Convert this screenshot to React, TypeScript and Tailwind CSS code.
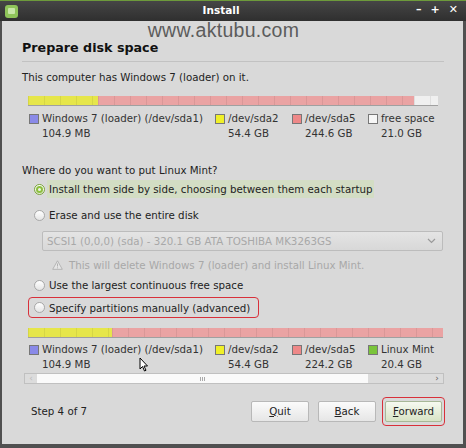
import React from "react";

const font = { fontFamily: '"DejaVu Sans", "Liberation Sans", sans-serif' };

function Radio({ checked }: { checked?: boolean }) {
  return (
    <span
      className={
        "inline-flex items-center justify-center w-[11px] h-[11px] rounded-full border shrink-0 " +
        (checked
          ? "border-[#7aa33a] bg-gradient-to-b from-[#ffffff] to-[#dfe8cf]"
          : "border-[#a8a8a8] bg-gradient-to-b from-[#ffffff] to-[#e4e4e4]")
      }
    >
      {checked && <span className="w-[7px] h-[7px] rounded-full border-2 border-[#8cbf3f]" />}
    </span>
  );
}

function Swatch({ color }: { color: string }) {
  return <span className="w-[10px] h-[10px] border border-[#777] shrink-0 mt-[3px]" style={{ background: color }} />;
}

function Legend({ items }: { items: { color: string; name: string; size: string; w: string }[] }) {
  return (
    <div className="flex pl-[27px] text-[10.25px] leading-[15px] text-[#333] whitespace-nowrap">
      {items.map((it, i) => (
        <div key={i} className={"flex gap-[3px] " + it.w}>
          <Swatch color={it.color} />
          <div className="flex flex-col">
            <span>{it.name}</span>
            <span>{it.size}</span>
          </div>
        </div>
      ))}
    </div>
  );
}

function Bar({ segs, width }: { segs: { color: string; w: number }[]; width: string }) {
  return (
    <div className={"flex h-[10px] ml-[26px] border-b border-[#a0a0a0] " + width}>
      {segs.map((s, i) => (
        <div
          key={i}
          className="h-full"
          style={{
            width: s.w,
            background: s.color,
            backgroundImage:
              "repeating-linear-gradient(90deg, rgba(0,0,0,0.07) 0 1px, transparent 1px 16px)",
          }}
        />
      ))}
    </div>
  );
}

export default function App() {
  return (
    <div className="w-[466px] h-[448px] bg-[#d9d9d9] flex flex-col overflow-hidden relative" style={font}>
      {/* title bar */}
      <div className="h-[21px] shrink-0 bg-gradient-to-b from-[#474747] to-[#2f2f2f] flex items-center relative">
        <div className="absolute left-0 right-0 top-0 h-[1px] bg-[#6d9a3b]" />
        <div className="ml-[5px] mt-[1px] w-[13px] h-[13px] rounded-[3px] bg-[#8fc45a] flex items-center justify-center">
          <div className="w-[7px] h-[6px] rounded-[1px] bg-[#c8e6a8]" />
        </div>
        <div className="flex-1 text-center text-white font-bold text-[10.5px] pl-[8px]">Install</div>
        <div className="flex gap-[9px] pr-[8px] text-white text-[11px] font-bold">
          <span>–</span>
          <span>+</span>
          <span>✕</span>
        </div>
      </div>
      <div className="flex-1 flex flex-col border-l-[2px] border-r-[3px] border-b-[4px] border-[#505050] text-[10.25px] text-[#222] whitespace-nowrap">
        {/* watermark */}
        <div
          className="h-[19px] text-center text-[#5c5c5c] text-[19.5px] leading-[19px] pr-[18px]"
          style={{ fontFamily: '"Liberation Sans", sans-serif', letterSpacing: "0.3px" }}
        >
          www.aktubu.com
        </div>
        <div className="pl-[20px] pr-[19px]">
          <div className="text-[12.7px] font-bold text-[#111] leading-[16px] h-[16px]">Prepare disk space</div>
          <div className="h-px bg-[#c2c2c2] mt-[5px]" />
        </div>
        <div className="pl-[20px] leading-[14px] mt-[8px]">This computer has Windows 7 (loader) on it.</div>
        <div className="mt-[12px]">
          <Bar
            width="w-[410px]"
            segs={[
              { color: "#e6e64a", w: 70 },
              { color: "#eaa3a3", w: 316 },
              { color: "#f0f0f0", w: 24 },
            ]}
          />
        </div>
        <div className="mt-[5px]">
          <Legend
            items={[
              { color: "#8a8ae8", name: "Windows 7 (loader) (/dev/sda1)", size: "104.9 MB", w: "w-[186px]" },
              { color: "#f0f028", name: "/dev/sda2", size: "54.4 GB", w: "w-[77px]" },
              { color: "#ee8888", name: "/dev/sda5", size: "244.6 GB", w: "w-[76px]" },
              { color: "#f6f6f6", name: "free space", size: "21.0 GB", w: "w-[80px]" },
            ]}
          />
        </div>
        <div className="pl-[20px] mt-[22px] leading-[14px]">Where do you want to put Linux Mint?</div>
        <div className="flex flex-col pl-[32px] leading-[16px]">
          <div className="flex items-center gap-[2px] mt-[3px] h-[18px]">
            <Radio checked />
            <span className="bg-[#d3ddc4] px-[2px] leading-[18px] h-[18px] rounded-[1px]">
              Install them side by side, choosing between them each startup
            </span>
          </div>
          <div className="flex items-center gap-[4px] mt-[9px] h-[16px]">
            <Radio />
            <span>Erase and use the entire disk</span>
          </div>
          <div className="ml-[8px] mt-[8px] w-[401px] h-[20px] border border-[#bcbcbc] rounded-[2px] bg-gradient-to-b from-[#e4e4e4] to-[#d8d8d8] flex items-center justify-between pl-[4px] pr-[6px] text-[#a8a8a8]">
            <span>SCSI1 (0,0,0) (sda) - 320.1 GB ATA TOSHIBA MK3263GS</span>
            <svg width="9" height="6" viewBox="0 0 9 6">
              <path d="M1 1 L4.5 4.5 L8 1" stroke="#9a9a9a" strokeWidth="1.2" fill="none" />
            </svg>
          </div>
          <div className="flex items-center gap-[6px] ml-[18px] mt-[7px] h-[14px] text-[#a8a8a8]">
            <svg width="11" height="10" viewBox="0 0 11 10">
              <path d="M5.5 0.8 L10.3 9.3 L0.7 9.3 Z" fill="#e6e6e6" stroke="#b0b0b0" strokeWidth="0.9" />
              <path d="M5.5 3.5 L5.5 6.5" stroke="#b0b0b0" strokeWidth="1" />
              <circle cx="5.5" cy="7.8" r="0.6" fill="#b0b0b0" />
            </svg>
            <span>This will delete Windows 7 (loader) and install Linux Mint.</span>
          </div>
          <div className="flex items-center gap-[4px] mt-[5px] h-[16px]">
            <Radio />
            <span>Use the largest continuous free space</span>
          </div>
          <div className="-ml-[6px] mt-[4px] w-[231px] h-[21px] border-[1.5px] border-[#d8303a] rounded-[4px] flex items-center gap-[4px] pl-[5px]">
            <Radio />
            <span>Specify partitions manually (advanced)</span>
          </div>
        </div>
        <div className="mt-[10px]">
          <Bar
            width="w-[415px]"
            segs={[
              { color: "#e6e64a", w: 84 },
              { color: "#eaa3a3", w: 331 },
            ]}
          />
        </div>
        <div className="mt-[4px]">
          <Legend
            items={[
              { color: "#8a8ae8", name: "Windows 7 (loader) (/dev/sda1)", size: "104.9 MB", w: "w-[186px]" },
              { color: "#f0f028", name: "/dev/sda2", size: "54.4 GB", w: "w-[77px]" },
              { color: "#ee8888", name: "/dev/sda5", size: "224.2 GB", w: "w-[76px]" },
              { color: "#7ac43a", name: "Linux Mint", size: "20.4 GB", w: "w-[80px]" },
            ]}
          />
        </div>
        {/* scrollbar */}
        <div className="ml-[22px] w-[420px] h-[11px] mt-[1px] border border-[#c0c0c0] bg-[#dcdcdc] flex items-center">
          <div className="w-[12px] h-full flex items-center justify-center text-[#bbb] text-[9px] leading-none">‹</div>
          <div className="w-[331px] h-full bg-[#fafafa] flex items-center justify-center">
            <div className="flex gap-[1px]">
              <span className="w-px h-[4px] bg-[#aaa]" />
              <span className="w-px h-[4px] bg-[#aaa]" />
              <span className="w-px h-[4px] bg-[#aaa]" />
            </div>
          </div>
          <div className="flex-1" />
          <div className="w-[12px] h-full flex items-center justify-center text-[#666] text-[9px] leading-none">›</div>
        </div>
        {/* bottom */}
        <div className="flex items-center mt-[17px] h-[21px] pl-[29px] pr-[21px]">
          <span className="flex-1">Step 4 of 7</span>
          <div className="flex items-center">
            <button className="w-[58px] h-[21px] border border-[#b8b8b8] rounded-[2px] bg-gradient-to-b from-[#fbfbfb] to-[#e6e6e6]">
              <span className="underline">Q</span>uit
            </button>
            <button className="ml-[9px] w-[58px] h-[21px] border border-[#b8b8b8] rounded-[2px] bg-gradient-to-b from-[#fbfbfb] to-[#e6e6e6]">
              <span className="underline">B</span>ack
            </button>
            <div className="relative ml-[9px]">
              <button className="w-[57px] h-[21px] border border-[#a8b898] rounded-[2px] bg-gradient-to-b from-[#f6f9f0] to-[#d8e4c6]">
                <span className="underline">F</span>orward
              </button>
              <span className="absolute -left-[3px] -right-[3px] -top-[4px] -bottom-[4px] border-[1.5px] border-[#d8303a] rounded-[4px]" />
            </div>
          </div>
        </div>
      </div>
      {/* mouse cursor */}
      <svg className="absolute left-[139px] top-[357px]" width="10" height="15" viewBox="0 0 10 15">
        <path d="M1 1 L1 12 L3.5 9.5 L5.5 14 L7 13.3 L5 9 L8.5 9 Z" fill="#fff" stroke="#000" strokeWidth="1" />
      </svg>
    </div>
  );
}
